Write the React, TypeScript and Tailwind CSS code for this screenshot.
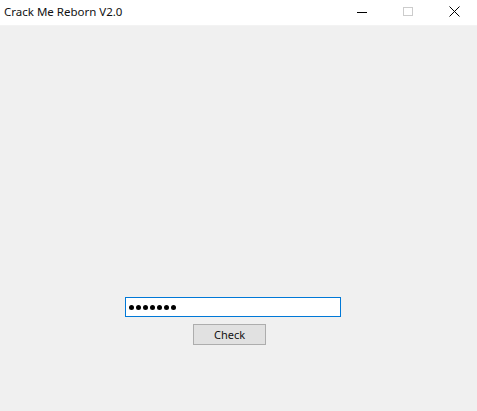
import React from 'react';

const dots = [0, 1, 2, 3, 4, 5, 6];

export default function App() {
  return (
    <div className="w-[477px] h-[411px] flex flex-col bg-[#f0f0f0] font-['Noto_Sans','Liberation_Sans',sans-serif] text-black overflow-hidden">
      {/* title bar */}
      <div className="h-[26px] bg-white flex items-center shrink-0 border-b border-[#f3f3f3]">
        <span className="pl-[4px] text-[11.5px] leading-none flex-1 -mt-[2px] text-[#111]">Crack Me Reborn V2.0</span>
        <div className="flex items-center h-full">
          <div className="w-[46px] h-full flex items-center justify-center">
            <div className="w-[10px] h-[1px] bg-black" />
          </div>
          <div className="w-[46px] h-full flex items-center justify-center">
            <div className="w-[10px] h-[9px] border border-[#cccccc] -mt-[3px]" />
          </div>
          <div className="w-[46px] h-full flex items-center justify-center">
            <svg width="11" height="11" viewBox="0 0 11 11" className="-mt-[3px]">
              <path d="M0.5 0.5 L10.5 10.5 M10.5 0.5 L0.5 10.5" stroke="#000" strokeWidth="1" fill="none" />
            </svg>
          </div>
        </div>
      </div>

      {/* client area */}
      <div className="flex flex-col items-start pt-[271px] pl-[125px]">
        <div className="w-[216px] h-[20px] bg-white border border-[#0078d7] flex items-center pl-[3px] gap-[2px]">
          {dots.map((d) => (
            <div key={d} className="w-[5px] h-[5px] rounded-full bg-black" />
          ))}
        </div>
        <button className="mt-[7px] ml-[68px] w-[73px] h-[21px] bg-[#e1e1e1] border border-[#adadad] text-[11px] leading-none flex items-center justify-center text-[#111]">
          Check
        </button>
      </div>
    </div>
  );
}
